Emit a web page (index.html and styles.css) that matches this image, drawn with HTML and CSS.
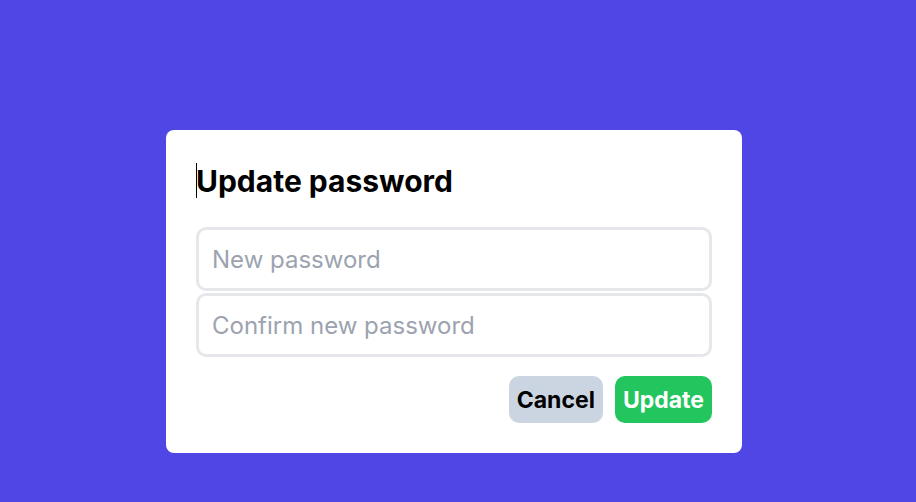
FILE: index.html
```html
<!DOCTYPE html>
<html lang="en">
<head>
<meta charset="utf-8">
<title>Update password</title>
<link rel="stylesheet" href="styles.css">
</head>
<body>
<div class="card">
  <h1 class="title">Update password</h1>
  <div class="fields">
    <input class="field" type="password" placeholder="New password">
    <input class="field" type="password" placeholder="Confirm new password">
  </div>
  <div class="actions">
    <button class="btn btn-cancel">Cancel</button>
    <button class="btn btn-update">Update</button>
  </div>
</div>
</body>
</html>
```
FILE: styles.css
```css
html, body {
  margin: 0;
  height: 100%;
}
body {
  background: #4f46e5;
  font-family: Inter, "Noto Sans", sans-serif;
  padding: 130px 0 0 166px;
  box-sizing: border-box;
}
.card {
  width: 576px;
  box-sizing: border-box;
  background: #ffffff;
  border-radius: 8px;
  padding: 33px 30px 30px;
}
.title {
  position: relative;
  margin: 0 0 28px;
  font-size: 30px;
  line-height: 36px;
  font-weight: 700;
  color: #000;
}
.title::before {
  content: "";
  position: absolute;
  left: 0;
  top: 0;
  width: 1px;
  height: 35px;
  background: #000;
}
.fields {
  display: flex;
  flex-direction: column;
  gap: 2px;
}
.field {
  display: block;
  width: 100%;
  height: 64px;
  box-sizing: border-box;
  border: 3px solid #e5e7eb;
  border-radius: 10px;
  padding: 0 13px;
  font-family: Inter, "Noto Sans", sans-serif;
  font-size: 24px;
  color: #111827;
  background: #fff;
  outline: none;
}
.field::placeholder {
  color: #9ca3af;
}
.actions {
  display: flex;
  justify-content: flex-end;
  gap: 12px;
  margin-top: 19px;
}
.btn {
  height: 47px;
  border: none;
  border-radius: 10px;
  padding: 0 8px;
  font-family: Inter, "Noto Sans", sans-serif;
  font-size: 23px;
  font-weight: 700;
}
.btn-cancel {
  background: #cbd5e1;
  color: #000;
}
.btn-update {
  background: #22c55e;
  color: #fff;
}
```
